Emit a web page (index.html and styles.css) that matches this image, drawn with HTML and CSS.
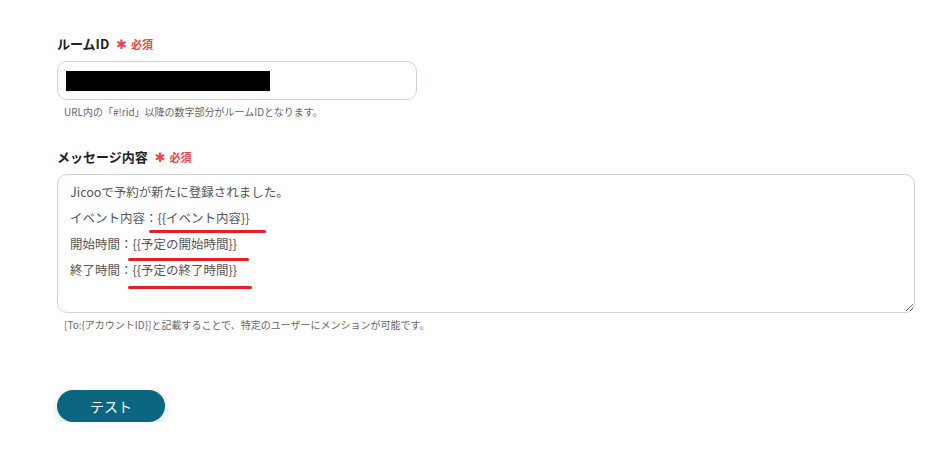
FILE: index.html
```html
<!DOCTYPE html>
<html lang="ja">
<head>
    <meta charset="UTF-8">
    <meta name="viewport" content="width=device-width, initial-scale=1.0">
    <title>設定</title>
    <link rel="stylesheet" href="styles.css">
</head>
<body>
    <div class="form">
        <div class="field">
            <label class="label">ルームID <span class="req"><span class="star">✱</span>必須</span></label>
            <div class="input short">
                <span class="masked"></span>
            </div>
            <p class="hint">URL内の「#!rid」以降の数字部分がルームIDとなります。</p>
        </div>
        <div class="field">
            <label class="label">メッセージ内容 <span class="req"><span class="star">✱</span>必須</span></label>
            <div class="textarea">
                <div class="line">Jicooで予約が新たに登録されました。</div>
                <div class="line">イベント内容：<span class="var v1">{{イベント内容}}</span></div>
                <div class="line">開始時間：<span class="var v2">{{予定の開始時間}}</span></div>
                <div class="line">終了時間：<span class="var v3">{{予定の終了時間}}</span></div>
            </div>
            <p class="hint">[To:{アカウントID}]と記載することで、特定のユーザーにメンションが可能です。</p>
        </div>
        <button class="test-btn">テスト</button>
    </div>
</body>
</html>
```

FILE: styles.css
```css
body {
    margin: 0;
    font-family: "Noto Sans CJK JP", "Noto Sans", sans-serif;
    color: #333;
    background: #fff;
}
.form {
    padding: 34px 35px 0 57px;
}
.field {
    margin-bottom: 28px;
}
.label {
    display: block;
    font-size: 13px;
    font-weight: bold;
    color: #222;
    margin-bottom: 6px;
    line-height: 20px;
}
.req {
    color: #e5484d;
    font-size: 11px;
    margin-left: 4px;
}
.star {
    font-family: "DejaVu Sans", sans-serif;
    font-size: 13px;
    margin-right: 4px;
}
.input {
    height: 39px;
    border: 1px solid #d0d4da;
    border-radius: 10px;
    box-sizing: border-box;
    padding: 8px 8px;
    display: flex;
    align-items: center;
}
.input.short {
    width: 360px;
}
.masked {
    display: block;
    width: 204px;
    height: 20px;
    background: #000;
}
.hint {
    margin: 5px 0 0 7px;
    font-size: 10px;
    color: #666;
    line-height: 14px;
}
.textarea {
    height: 139px;
    box-sizing: border-box;
    border: 1px solid #d0d4da;
    border-radius: 10px;
    padding: 4px 12px;
    font-size: 12.5px;
    color: #555;
    line-height: 26px;
    resize: vertical;
    overflow: auto;
}
.var {
    position: relative;
}
.var::after {
    content: "";
    position: absolute;
    height: 3px;
    border-radius: 2px;
    background: #e0202a;
}
.var.v1::after {
    left: -9px;
    right: -17px;
    bottom: -6px;
}
.var.v2::after {
    left: -5px;
    right: -12px;
    bottom: -8px;
}
.var.v3::after {
    left: -5px;
    right: -15px;
    bottom: -10px;
}
.test-btn {
    margin-top: 30px;
    width: 108px;
    height: 32px;
    border: none;
    border-radius: 16px;
    background: #0b6681;
    color: #fff;
    font-family: inherit;
    font-size: 14px;
    box-shadow: 0 4px 10px rgba(0, 0, 0, 0.15);
    cursor: pointer;
}
```
